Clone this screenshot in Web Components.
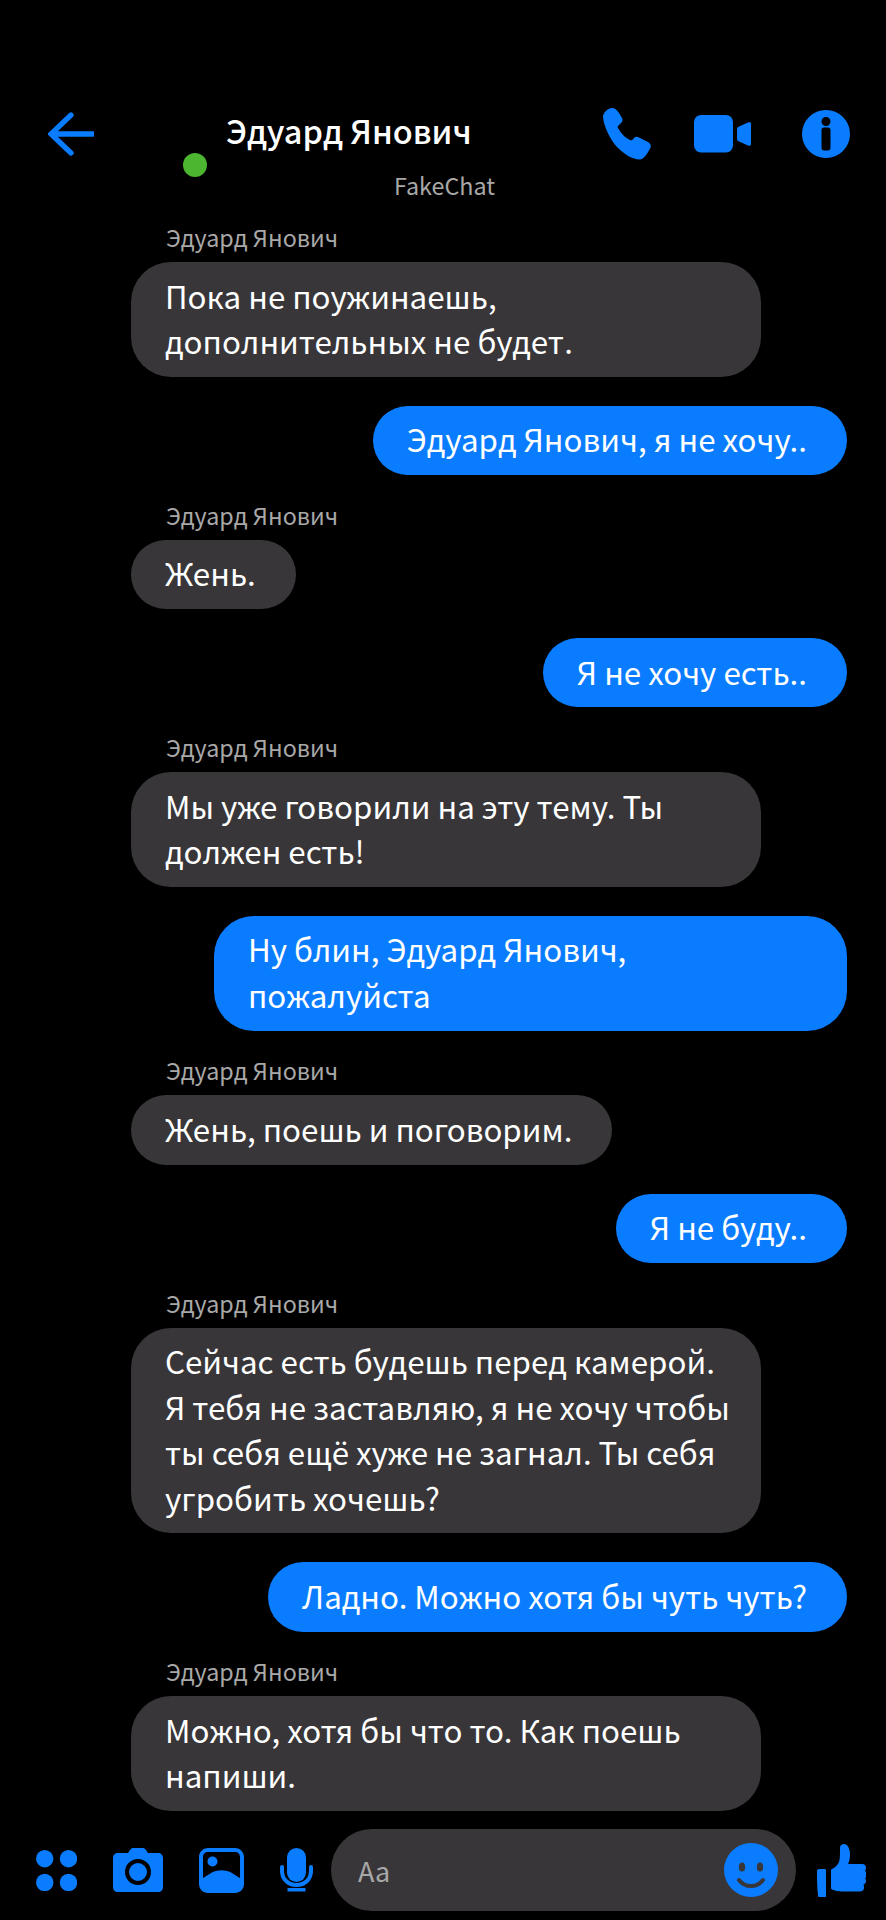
<!doctype html>
<html lang="ru">
<head>
<meta charset="utf-8">
<title>FakeChat</title>
<style>
  html, body { margin: 0; background: #000; }
  body { font-family: "Noto Sans CJK SC", "Noto Sans", sans-serif; }
</style>
</head>
<body>
<chat-app>
  <chat-header slot="header" name="Эдуард Янович" sub="FakeChat"></chat-header>

  <chat-message wrapped from="Эдуард Янович">Пока не поужинаешь, дополнительных не будет.</chat-message>
  <chat-message mine>Эдуард Янович, я не хочу..</chat-message>
  <chat-message from="Эдуард Янович">Жень.</chat-message>
  <chat-message mine>Я не хочу есть..</chat-message>
  <chat-message wrapped from="Эдуард Янович">Мы уже говорили на эту тему. Ты должен есть!</chat-message>
  <chat-message wrapped mine>Ну блин, Эдуард Янович, пожалуйста</chat-message>
  <chat-message from="Эдуард Янович">Жень, поешь и поговорим.</chat-message>
  <chat-message mine>Я не буду..</chat-message>
  <chat-message wrapped from="Эдуард Янович">Сейчас есть будешь перед камерой. Я тебя не заставляю, я не хочу чтобы ты себя ещё хуже не загнал. Ты себя угробить хочешь?</chat-message>
  <chat-message mine>Ладно. Можно хотя бы чуть чуть?</chat-message>
  <chat-message wrapped from="Эдуард Янович">Можно, хотя бы что то. Как поешь напиши.</chat-message>

  <chat-composer slot="composer" placeholder="Aa"></chat-composer>
</chat-app>

<script>
class ChatApp extends HTMLElement {
  constructor() {
    super();
    this.attachShadow( {mode: 'open'} ).innerHTML = `
      <style>
        :host {
          background: #000;
          box-sizing: border-box;
          display: flex;
          flex-direction: column;
          height: 1920px;
          overflow: hidden;
        }

        main {
          display: flex;
          flex-direction: column;
          gap: 28.8px;
          padding: 0 39px 0 131px;
        }
      </style>
      <slot name="header"></slot>
      <main><slot></slot></main>
      <slot name="composer"></slot>
    `;
  }
}

class ChatHeader extends HTMLElement {
  constructor() {
    super();
    this.attachShadow( {mode: 'open'} ).innerHTML = `
      <style>
        :host {
          box-sizing: border-box;
          color: #fff;
          display: block;
          height: 226px;
          padding-top: 108px;
        }

        .top {
          align-items: flex-start;
          display: flex;
          height: 52px;
          padding-right: 36px;
        }

        svg { display: block; fill: #0a7cff; flex: none; }

        .back { margin: 4px 0 0 48px; }

        .dot {
          background: #4cb631;
          border-radius: 50%;
          height: 24px;
          margin: 45px 0 0 89px;
          width: 24px;
        }

        h1 {
          font-size: 32.5px;
          font-weight: 500;
          line-height: 44px;
          margin: 0 auto 0 19px;
          white-space: nowrap;
        }

        .video { margin: 7px 0 0 42px; }
        .info { margin: 2px 0 0 51px; }

        p {
          color: #a8a8a8;
          font-size: 23.3px;
          line-height: 32px;
          margin: 9px 0 0 394px;
        }
      </style>
      <div class="top">
        <svg class="back" width="46" height="44" viewBox="0 0 46 44"><path d="M23 3 3 22l20 19M4 22h41" fill="none" stroke="#0a7cff" stroke-width="5.3" stroke-linecap="round"/></svg>
        <span class="dot"></span>
        <h1></h1>
        <svg class="phone" width="50" height="52" viewBox="0 0 50 52"><path d="M1 8c1-4 5-8 9-8 3 0 5 2 7 5l3 5c1 2 .5 4-1 5l-3 3c-.5.5-.5 1 0 2 2 4 7 10 12 12 1 .5 2 .5 2.500-.2l2-2.300c1-1 3-1 4.500 0l9 4.500c2 1.200 3.500 3.500 2.500 5.500-2 4-6 12-11 12-7 0-15-5-22-12S1 17 1 8z"/></svg>
        <svg class="video" width="57" height="38" viewBox="0 0 57 38"><rect width="39" height="37.500" rx="7"/><path d="M43 14c0-.8.300-1.500 1-2l10-4.500c1-.5 3-.5 3 1v21c0 1.500-2 1.500-3 1l-10-4.500c-.7-.5-1-1.200-1-2z"/></svg>
        <svg class="info" width="48" height="48" viewBox="0 0 48 48"><path fill-rule="evenodd" d="M24 0a24 24 0 1 1 0 48 24 24 0 0 1 0-48zm0 7a4.500 4.500 0 1 0 0 9 4.500 4.500 0 0 0 0-9zm-4.500 13v18c0 1.500 1 2.500 2.500 2.500h4c1.500 0 2.500-1 2.500-2.500V20c0-1.500-1-2.500-2.500-2.500h-4c-1.500 0-2.500 1-2.500 2.500z"/></svg>
      </div>
      <p></p>
    `;
  }

  connectedCallback() {
    this.shadowRoot.querySelector( 'h1' ).textContent = this.getAttribute( 'name' );
    this.shadowRoot.querySelector( 'p' ).textContent = this.getAttribute( 'sub' );
  }
}

class ChatMessage extends HTMLElement {
  constructor() {
    super();
    this.attachShadow( {mode: 'open'} ).innerHTML = `
      <style>
        :host {
          display: flex;
          flex-direction: column;
          align-items: flex-start;
        }

        :host( [mine] ) { align-items: flex-end; }

        .from {
          color: #a8a8a8;
          font-size: 23.3px;
          height: 36px;
          line-height: 22px;
          padding-left: 35px;
        }

        :host( [mine] ) .from { display: none; }

        .bubble {
          background: #383639;
          border-radius: 40px;
          box-sizing: border-box;
          color: #fff;
          font-size: 31.3px;
          line-height: 45.4px;
          padding: 10.5px 40px 13.5px 34px;
        }

        :host( [wrapped] ) .bubble {
          padding-right: 30px;
          width: 630px;
        }

        :host( [wrapped][mine] ) .bubble {
          padding-right: 40px;
          width: 633px;
        }

        :host( [mine] ) .bubble { background: #0a7cff; }
      </style>
      <div class="from"></div>
      <div class="bubble"><slot></slot></div>
    `;
  }

  connectedCallback() {
    this.shadowRoot.querySelector( '.from' ).textContent = this.getAttribute( 'from' ) || '';
  }
}

class ChatComposer extends HTMLElement {
  constructor() {
    super();
    this.attachShadow( {mode: 'open'} ).innerHTML = `
      <style>
        :host {
          align-items: center;
          display: flex;
          height: 82px;
          margin-top: auto;
          padding-bottom: 9px;
        }

        svg { display: block; fill: #0a7cff; flex: none; }

        .apps { margin-left: 36px; }
        .camera { margin-left: 36px; }
        .gallery { margin-left: 36px; }
        .mic { margin-left: 36px; }
        .like { margin-left: 20px; }

        .field {
          align-items: center;
          background: #383639;
          border-radius: 41px;
          box-sizing: border-box;
          display: flex;
          height: 82px;
          justify-content: space-between;
          margin-left: 18px;
          padding: 0 18px 0 27px;
          width: 465px;
        }

        span { color: #a8a8a8; font-size: 27px; }
      </style>
      <svg class="apps" width="41" height="41" viewBox="0 0 41 41"><circle cx="8.700" cy="8.700" r="8.700"/><circle cx="32.500" cy="8.700" r="8.700"/><circle cx="8.700" cy="32.500" r="8.700"/><circle cx="32.500" cy="32.500" r="8.700"/></svg>
      <svg class="camera" width="50" height="44" viewBox="0 0 50 44"><path fill-rule="evenodd" d="M15 5l2-3c.7-1 1.500-2 3-2h10c1.500 0 2.300 1 3 2l2 3h10c3 0 5 2 5 5v29c0 3-2 5-5 5H5c-3 0-5-2-5-5V10c0-3 2-5 5-5zm10 6a13 13 0 1 0 0 26 13 13 0 0 0 0-26zm0 4a9 9 0 1 1 0 18 9 9 0 0 1 0-18z"/></svg>
      <svg class="gallery" width="45" height="45" viewBox="0 0 45 45"><path fill-rule="evenodd" d="M9 0h27c5 0 9 4 9 9v27c0 5-4 9-9 9H9c-5 0-9-4-9-9V9c0-5 4-9 9-9zm0 4C6 4 4 6 4 9v21c4-2 8-6 13-7 4-1 7-1 11 0 5 1 9 5 13 7V9c0-3-2-5-5-5z"/><circle cx="13.500" cy="13.500" r="5"/></svg>
      <svg class="mic" width="33" height="44" viewBox="0 0 33 44"><rect x="7" y="0" width="19" height="34" rx="9.500"/><path d="M2 19v4c0 8 6 14 14.500 14S31 31 31 23v-4" fill="none" stroke="#0a7cff" stroke-width="4" stroke-linecap="round"/><rect x="7.500" y="40" width="18" height="3.500"/></svg>
      <div class="field">
        <span></span>
        <svg width="54" height="54" viewBox="0 0 54 54"><circle cx="27" cy="27" r="27"/><ellipse cx="18" cy="24" rx="3.200" ry="4.500" fill="#383639"/><ellipse cx="36" cy="24" rx="3.200" ry="4.500" fill="#383639"/><path d="M15 37c3 4 7.500 6 12 6s9-2 12-6" fill="none" stroke="#383639" stroke-width="4" stroke-linecap="round"/></svg>
      </div>
      <svg class="like" width="50" height="53" viewBox="0 0 50 53"><path d="M1 27c0-1 1-2 2-2h6c1 0 1 1 1 2v25c0 .6-.4 1-1 1H3c-1 0-1-1-1-2-1-8-1-16-1-24z"/><path d="M16 25c2-1 5-3 7-7 1-3 1-8 1-14 0-3 2-4 4-4 4 0 6 5 6 11 0 4-1 7-2 9h14c3 0 4 2 4 4 0 1-.5 2-1 3 1 1 2 2 2 3.500s-.7 3-2 3.500c.7 1 1 2 1 3 0 2-1 3-2.500 3.500.5 1 .5 2 .5 3 0 3-2 4-5 4H26c-4 0-7-1-10-2-1-.5-1-1-1-2V27c0-1 0-1.500 1-2z"/></svg>
    `;
  }

  connectedCallback() {
    this.shadowRoot.querySelector( 'span' ).textContent = this.getAttribute( 'placeholder' );
  }
}

window.customElements.define( 'chat-app', ChatApp );
window.customElements.define( 'chat-header', ChatHeader );
window.customElements.define( 'chat-message', ChatMessage );
window.customElements.define( 'chat-composer', ChatComposer );
</script>
</body>
</html>
